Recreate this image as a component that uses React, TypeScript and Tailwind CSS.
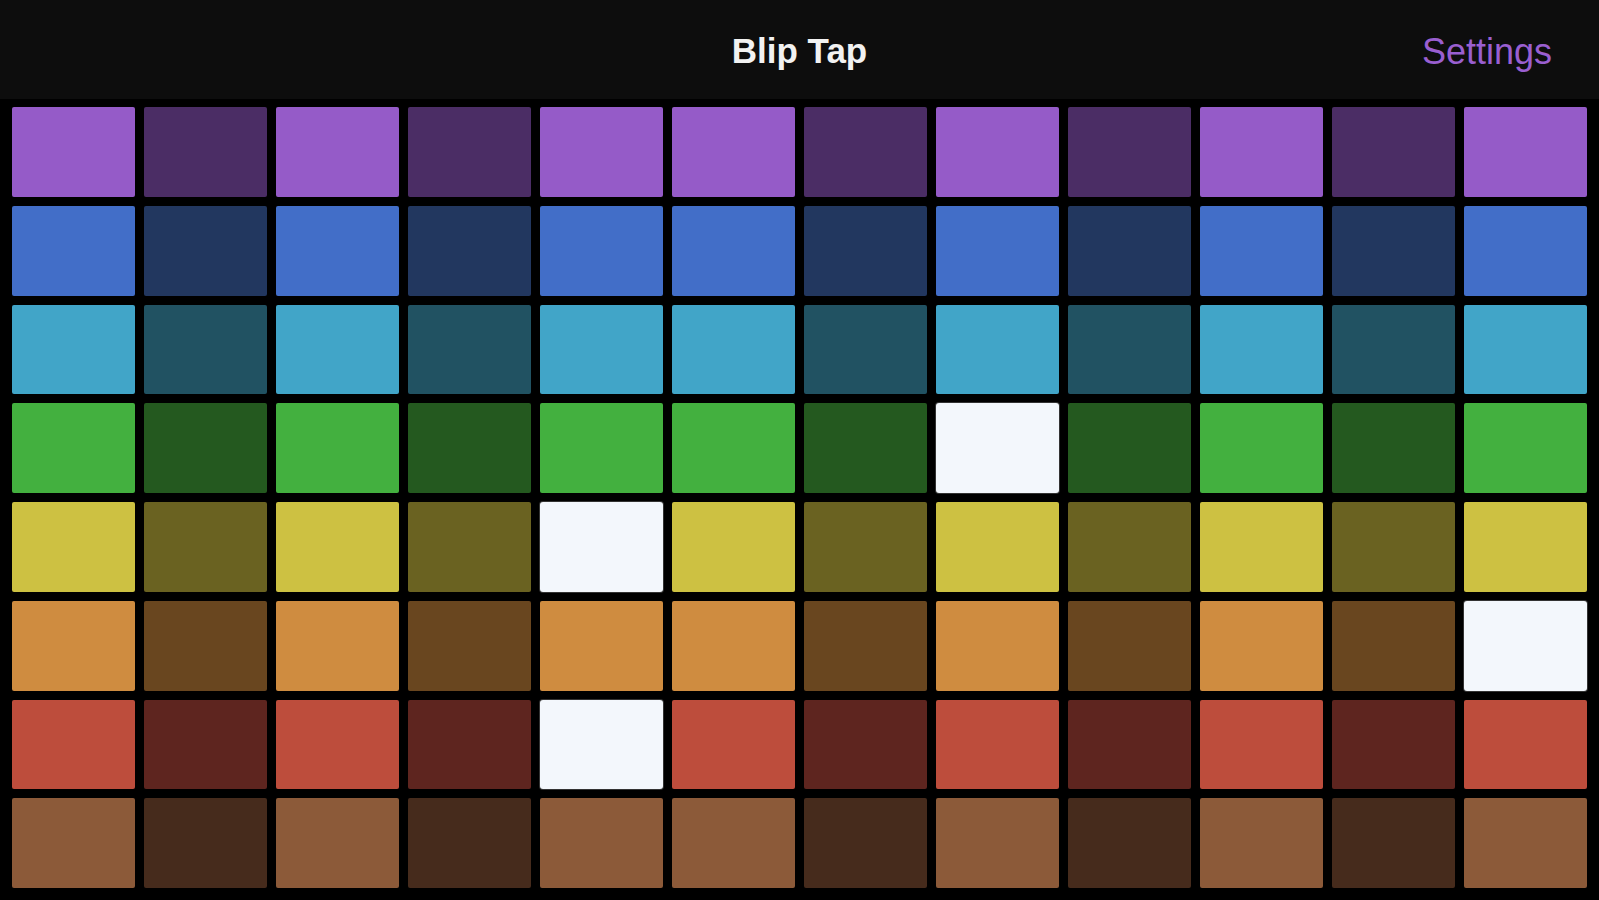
const palette = [
  { on: "bg-[#955bc8]", off: "bg-[#4b2d65]" },
  { on: "bg-[#426ec8]", off: "bg-[#22375f]" },
  { on: "bg-[#41a5c8]", off: "bg-[#215262]" },
  { on: "bg-[#43b03f]", off: "bg-[#24591f]" },
  { on: "bg-[#cdc142]", off: "bg-[#6a6221]" },
  { on: "bg-[#cf8c40]", off: "bg-[#69461f]" },
  { on: "bg-[#bd4d3c]", off: "bg-[#5e251f]" },
  { on: "bg-[#8c5a39]", off: "bg-[#462b1c]" },
];

// which columns are lit (same for every row)
const lit = [true, false, true, false, true, true, false, true, false, true, false, true];

// currently playing cells, [row, col]
const playing = ["3-7", "4-4", "5-11", "6-4"];

export default function App() {
  return (
    <div className="flex h-screen w-full flex-col bg-black font-['Liberation_Sans',Arial,sans-serif]">
      <header className="relative flex h-[99px] shrink-0 items-center justify-center bg-[#0d0d0d] pt-1">
        <h1 className="text-[35px] font-bold text-[#f2f2f2]">Blip Tap</h1>
        <button className="absolute right-[47px] top-1/2 -translate-y-[calc(50%-2px)] text-[36px] text-[#9a5fd0]">
          Settings
        </button>
      </header>
      <main className="grid flex-1 grid-cols-12 grid-rows-8 gap-[9px] px-3 pb-3 pt-2">
        {palette.map((row, r) =>
          lit.map((on, c) => {
            const hot = playing.includes(`${r}-${c}`);
            return (
              <div
                key={`${r}-${c}`}
                className={
                  hot
                    ? "rounded-[3px] bg-[#f3f7fc] shadow-[0_0_0_1px_#333]"
                    : `rounded-[2px] ${on ? row.on : row.off}`
                }
              />
            );
          })
        )}
      </main>
    </div>
  );
}
